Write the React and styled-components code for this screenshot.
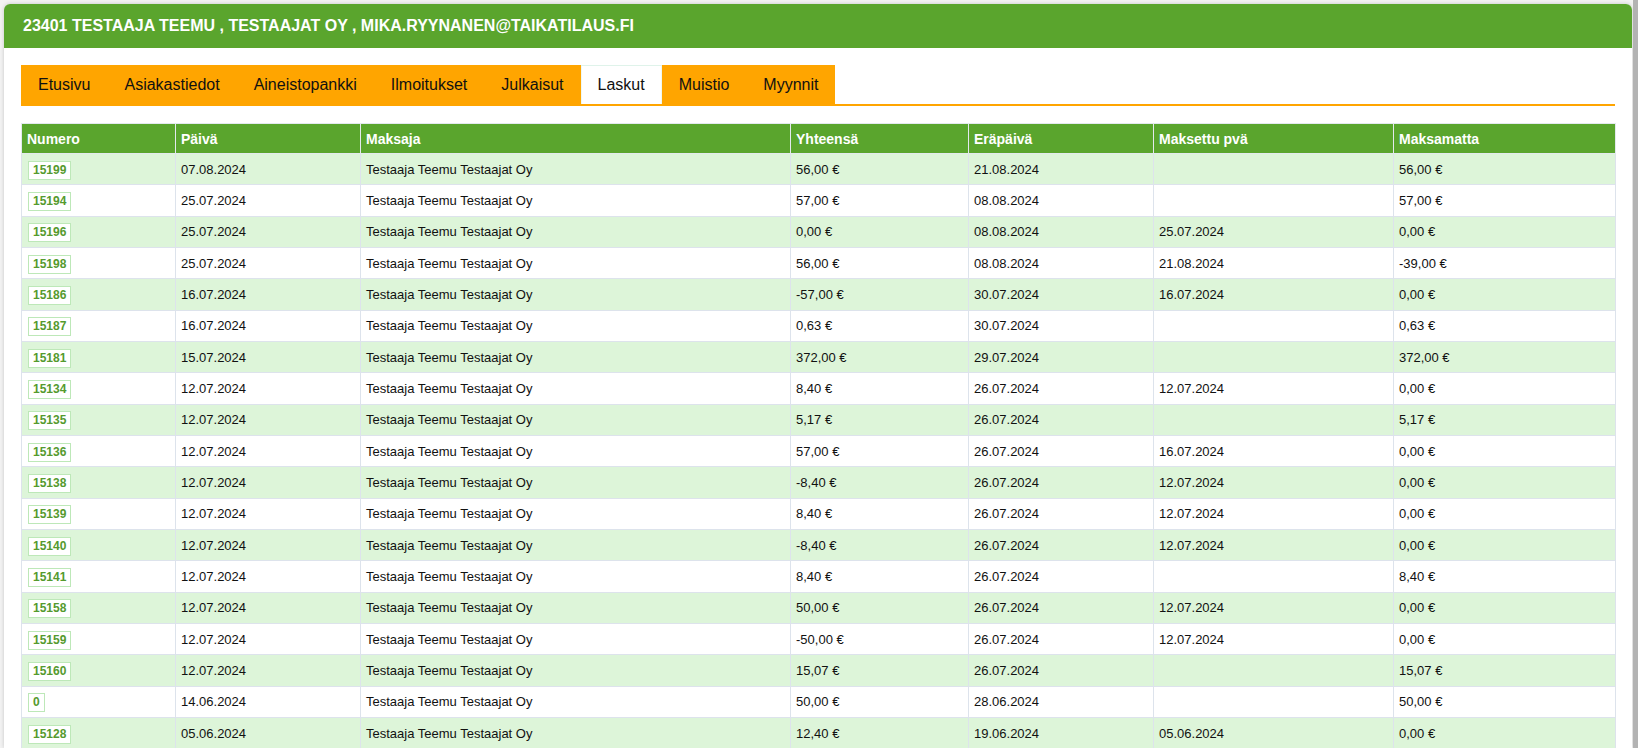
import React from 'react'
import styled, { createGlobalStyle } from 'styled-components'

const GlobalStyle = createGlobalStyle`
  html, body {
    margin: 0;
    padding: 0;
    background: #f3f3f3;
    font-family: "Liberation Sans", Arial, sans-serif;
    overflow: hidden;
  }
`

const green = '#5aa52d'
const orange = '#ffa500'

const Page = styled.div`
  display: flex;
  height: 748px;
  padding-top: 4px;
  box-sizing: border-box;
`

const Panel = styled.div`
  flex: 1;
  margin-left: 4px;
  margin-right: 1px;
  background: #fff;
  border-radius: 6px 6px 0 0;
  box-shadow: 0 0 4px rgba(0, 0, 0, 0.18);
  overflow: hidden;
`

const Rail = styled.div`
  width: 5px;
  background: #b3b3b3;
  margin-top: -4px;
`

const TitleBar = styled.div`
  background: ${green};
  height: 44px;
  display: flex;
  align-items: center;
  padding-left: 19px;
  color: #fff;
  font-size: 16px;
  font-weight: bold;
  text-transform: uppercase;
`

const Body = styled.div`
  padding: 17px 17px 0 17px;
`

const TabBar = styled.div`
  display: flex;
  border-bottom: 2px solid ${orange};
  margin-bottom: 17px;
`

const Tab = styled.div`
  height: 39px;
  display: flex;
  align-items: center;
  padding: 0 17px;
  font-size: 16px;
  color: #111;
  background: ${p => (p.$active ? '#fff' : orange)};
  box-shadow: ${p => (p.$active ? 'inset 0 1px 0 #dff3ea, inset 1px 0 0 #eef8f3, inset -1px 0 0 #eef8f3' : 'none')};
  cursor: pointer;
`

const Table = styled.table`
  width: 100%;
  border-collapse: collapse;
  table-layout: fixed;
  font-size: 13px;
  color: #111;
`

const HeadCell = styled.th`
  background: ${green};
  color: #fff;
  font-size: 14px;
  font-weight: bold;
  text-align: left;
  height: 30px;
  padding: 0 5px;
  border: 1px solid #e3e9ee;
  box-sizing: border-box;
`

const Row = styled.tr`
  background: ${p => (p.$odd ? '#ddf5d9' : '#fff')};
  height: 31.33px;
`

const Cell = styled.td`
  padding: 0 5px;
  border: 1px solid #dde3ec;
  white-space: nowrap;
  vertical-align: middle;
`

const Badge = styled.span`
  display: inline-block;
  vertical-align: middle;
  border: 1px solid #bde8b8;
  background: #fff;
  color: #559a2e;
  font-size: 12px;
  font-weight: bold;
  line-height: 17px;
  padding: 0 4px;
  margin: 2px 0 0 1px;
`

const tabs = ['Etusivu', 'Asiakastiedot', 'Aineistopankki', 'Ilmoitukset', 'Julkaisut', 'Laskut', 'Muistio', 'Myynnit']

const columns = [
  { title: 'Numero', width: 154 },
  { title: 'Päivä', width: 185 },
  { title: 'Maksaja', width: 430 },
  { title: 'Yhteensä', width: 178 },
  { title: 'Eräpäivä', width: 185 },
  { title: 'Maksettu pvä', width: 240 },
  { title: 'Maksamatta', width: 222 },
]

const payer = 'Testaaja Teemu Testaajat Oy'

const invoices = [
  ['15199', '07.08.2024', '56,00 €', '21.08.2024', '', '56,00 €'],
  ['15194', '25.07.2024', '57,00 €', '08.08.2024', '', '57,00 €'],
  ['15196', '25.07.2024', '0,00 €', '08.08.2024', '25.07.2024', '0,00 €'],
  ['15198', '25.07.2024', '56,00 €', '08.08.2024', '21.08.2024', '-39,00 €'],
  ['15186', '16.07.2024', '-57,00 €', '30.07.2024', '16.07.2024', '0,00 €'],
  ['15187', '16.07.2024', '0,63 €', '30.07.2024', '', '0,63 €'],
  ['15181', '15.07.2024', '372,00 €', '29.07.2024', '', '372,00 €'],
  ['15134', '12.07.2024', '8,40 €', '26.07.2024', '12.07.2024', '0,00 €'],
  ['15135', '12.07.2024', '5,17 €', '26.07.2024', '', '5,17 €'],
  ['15136', '12.07.2024', '57,00 €', '26.07.2024', '16.07.2024', '0,00 €'],
  ['15138', '12.07.2024', '-8,40 €', '26.07.2024', '12.07.2024', '0,00 €'],
  ['15139', '12.07.2024', '8,40 €', '26.07.2024', '12.07.2024', '0,00 €'],
  ['15140', '12.07.2024', '-8,40 €', '26.07.2024', '12.07.2024', '0,00 €'],
  ['15141', '12.07.2024', '8,40 €', '26.07.2024', '', '8,40 €'],
  ['15158', '12.07.2024', '50,00 €', '26.07.2024', '12.07.2024', '0,00 €'],
  ['15159', '12.07.2024', '-50,00 €', '26.07.2024', '12.07.2024', '0,00 €'],
  ['15160', '12.07.2024', '15,07 €', '26.07.2024', '', '15,07 €'],
  ['0', '14.06.2024', '50,00 €', '28.06.2024', '', '50,00 €'],
  ['15128', '05.06.2024', '12,40 €', '19.06.2024', '05.06.2024', '0,00 €'],
]

export default function App() {
  return (
    <>
      <GlobalStyle />
      <Page>
        <Panel>
          <TitleBar>23401 Testaaja Teemu , Testaajat Oy , mika.ryynanen@taikatilaus.fi</TitleBar>
          <Body>
            <TabBar>
              {tabs.map(t => (
                <Tab key={t} $active={t === 'Laskut'}>{t}</Tab>
              ))}
            </TabBar>
            <Table>
              <colgroup>
                {columns.map(c => <col key={c.title} style={{ width: c.width }} />)}
              </colgroup>
              <thead>
                <tr>
                  {columns.map(c => <HeadCell key={c.title}>{c.title}</HeadCell>)}
                </tr>
              </thead>
              <tbody>
                {invoices.map((r, i) => (
                  <Row key={i} $odd={i % 2 === 0}>
                    <Cell><Badge>{r[0]}</Badge></Cell>
                    <Cell>{r[1]}</Cell>
                    <Cell>{payer}</Cell>
                    <Cell>{r[2]}</Cell>
                    <Cell>{r[3]}</Cell>
                    <Cell>{r[4]}</Cell>
                    <Cell>{r[5]}</Cell>
                  </Row>
                ))}
              </tbody>
            </Table>
          </Body>
        </Panel>
        <Rail />
      </Page>
    </>
  )
}
